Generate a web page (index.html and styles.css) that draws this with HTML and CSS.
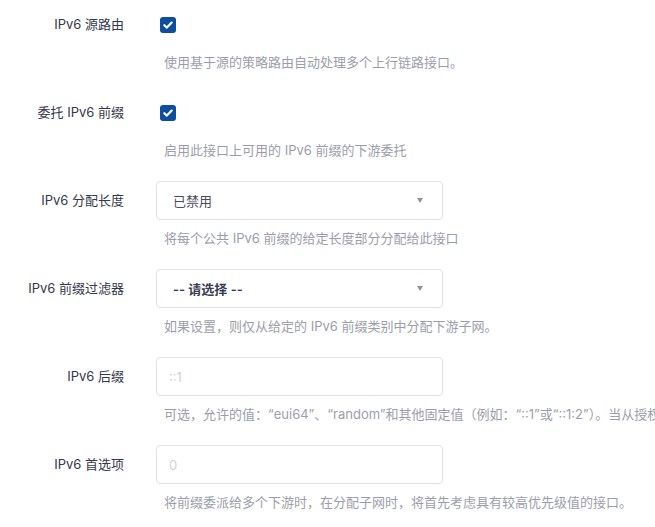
FILE: index.html
```html
<!DOCTYPE html>
<html lang="zh-CN">
<head>
<meta charset="utf-8">
<title>IPv6 设置</title>
<link rel="stylesheet" href="styles.css">
</head>
<body>
<div class="form">
  <div class="row">
    <label class="label">IPv6 源路由</label>
    <div class="field">
      <div class="control">
        <span class="checkbox"><svg viewBox="0 0 16 16" width="16" height="16"><path d="M4.3 8.2 L6.9 10.6 L11.7 5.6" fill="none" stroke="#fff" stroke-width="2.2" stroke-linecap="round" stroke-linejoin="round"/></svg></span>
      </div>
      <div class="desc">使用基于源的策略路由自动处理多个上行链路接口。</div>
    </div>
  </div>
  <div class="row">
    <label class="label">委托 IPv6 前缀</label>
    <div class="field">
      <div class="control">
        <span class="checkbox"><svg viewBox="0 0 16 16" width="16" height="16"><path d="M4.3 8.2 L6.9 10.6 L11.7 5.6" fill="none" stroke="#fff" stroke-width="2.2" stroke-linecap="round" stroke-linejoin="round"/></svg></span>
      </div>
      <div class="desc">启用此接口上可用的 IPv6 前缀的下游委托</div>
    </div>
  </div>
  <div class="row">
    <label class="label">IPv6 分配长度</label>
    <div class="field">
      <div class="select"><span class="value">已禁用</span><span class="arrow"></span></div>
      <div class="desc">将每个公共 IPv6 前缀的给定长度部分分配给此接口</div>
    </div>
  </div>
  <div class="row">
    <label class="label">IPv6 前缀过滤器</label>
    <div class="field">
      <div class="select"><span class="value strong">-- 请选择 --</span><span class="arrow"></span></div>
      <div class="desc">如果设置，则仅从给定的 IPv6 前缀类别中分配下游子网。</div>
    </div>
  </div>
  <div class="row">
    <label class="label">IPv6 后缀</label>
    <div class="field">
      <div class="input"><span class="placeholder">::1</span></div>
      <div class="desc">可选，允许的值：“eui64”、“random”和其他固定值（例如：“::1”或“::1:2”）。当从授权服务器收到 IPv6 前缀时，使用后缀组成接口的 IPv6 地址。</div>
    </div>
  </div>
  <div class="row">
    <label class="label">IPv6 首选项</label>
    <div class="field">
      <div class="input"><span class="placeholder">0</span></div>
      <div class="desc">将前缀委派给多个下游时，在分配子网时，将首先考虑具有较高优先级值的接口。</div>
    </div>
  </div>
</div>
</body>
</html>
```
FILE: styles.css
```css
html, body {
  margin: 0;
  padding: 0;
  background: #ffffff;
  overflow: hidden;
}
body {
  font-family: Inter, "Noto Sans CJK SC", sans-serif;
  font-size: 13px;
  color: #32354a;
}
.form {
  padding-top: 5px;
  display: flex;
  flex-direction: column;
  gap: 20px;
}
.row {
  display: flex;
  align-items: flex-start;
}
.label {
  width: 124px;
  flex: none;
  text-align: right;
  line-height: 39px;
  height: 39px;
  color: #35384c;
  white-space: nowrap;
}
.field {
  margin-left: 32px;
  display: flex;
  flex-direction: column;
}
.control {
  height: 39px;
  display: flex;
  align-items: center;
  padding-left: 4px;
}
.checkbox {
  width: 16px;
  height: 16px;
  border-radius: 3px;
  background: #0d4e9e;
  display: block;
}
.checkbox svg {
  display: block;
}
.select, .input {
  box-sizing: border-box;
  width: 287px;
  height: 39px;
  border: 1px solid #dfe2e8;
  border-radius: 4px;
  display: flex;
  align-items: center;
  justify-content: space-between;
  background: #fff;
}
.select {
  padding: 0 19px 0 16px;
}
.input {
  padding: 0 12px;
}
.value {
  color: #4a4d5c;
}
.value.strong {
  color: #3a3d4f;
  font-weight: 600;
}
.arrow {
  width: 0;
  height: 0;
  border-left: 3px solid transparent;
  border-right: 3px solid transparent;
  border-top: 5px solid #8b93a6;
}
.placeholder {
  color: #cfd2d8;
}
.desc {
  margin-top: 8px;
  line-height: 21px;
  padding-left: 8px;
  color: #9b9eaa;
  white-space: nowrap;
}
```
